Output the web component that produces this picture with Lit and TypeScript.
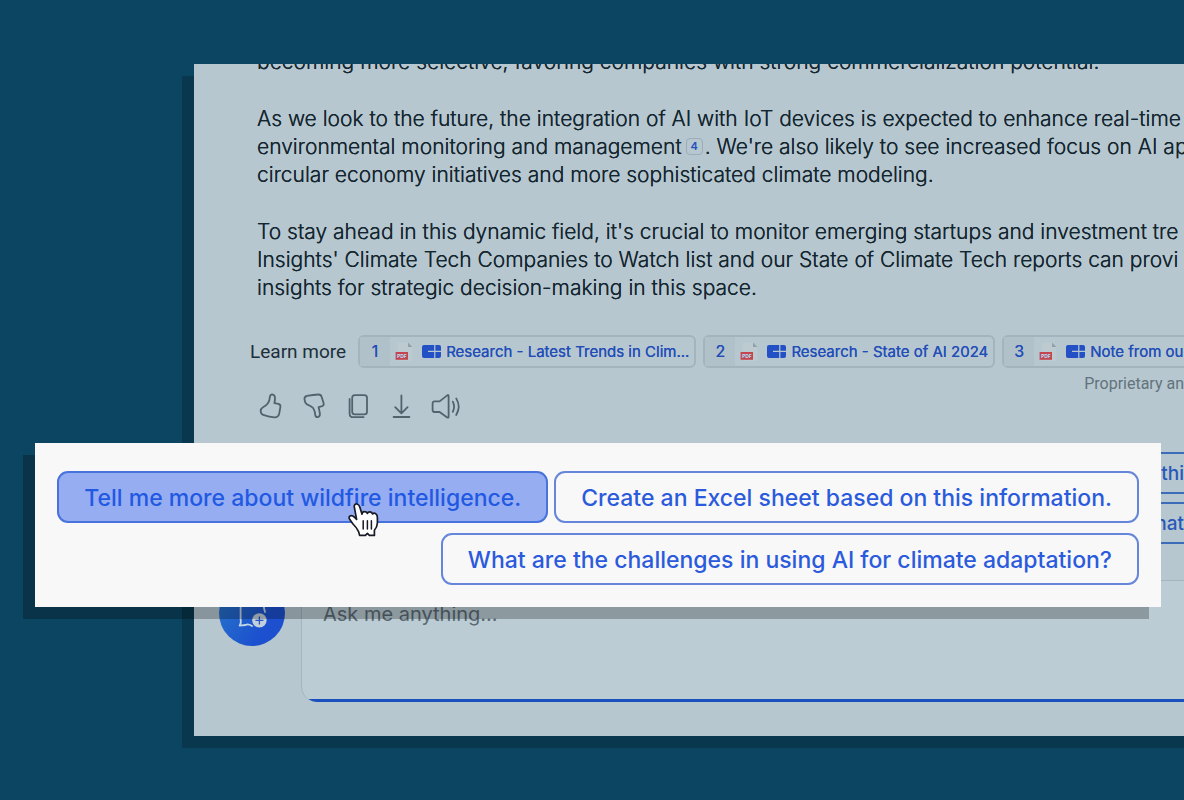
import { LitElement, html, css, svg } from "lit";
import { customElement } from "lit/decorators.js";

interface Source {
  num: number;
  title: string;
}

const sources: Source[] = [
  { num: 1, title: "Research - Latest Trends in Clim..." },
  { num: 2, title: "Research - State of AI 2024" },
  { num: 3, title: "Note from our" },
];

const actions = [
  {
    label: "Like",
    shape: svg`<path d="M13.8 5.2Q14.2 2.4 16.2 2.4Q18.8 2.6 19 6Q19 8.6 18.4 11.2L22.4 11.9Q24.7 12.5 24.4 14.8L23.2 21.6Q22.4 25.4 18.6 25.3Q13.5 25.3 7.2 22.9Q4.8 22 4.7 19.2Q4.6 16.6 7 15.2Q13.6 11.8 13.8 5.2Z"/>`,
  },
  {
    label: "Dislike",
    shape: svg`<path d="M4.5 7.4Q4.2 4.6 7 3.9Q13 2.6 18.4 2.5Q21 2.4 21.7 4.9L23.7 11.4Q24 13.4 22.2 14.1L18.6 15.2Q19.4 18.5 19.9 21.6Q20.2 24.7 17.6 25.2Q15.5 25.4 15.2 22.6Q14.6 16.6 11.6 14.8Q9.4 13.4 7 12.4Q4.8 11 4.5 7.4Z"/>`,
  },
  {
    label: "Copy",
    shape: svg`<rect x="8.2" y="3.2" width="14.8" height="19.2" rx="2.6"/><path d="M5.6 7V21.4Q5.6 25.2 9.4 25.2H19.6"/>`,
  },
  {
    label: "Download",
    shape: svg`<path d="M13.4 3.4V21.2M7.2 15.2L13.4 21.4L19.6 15.2M5.6 25H21.4"/>`,
  },
  {
    label: "Read aloud",
    shape: svg`<path d="M16.6 4.1Q16.6 2.3 15.2 3.4L7.6 9.4H2.6Q.6 9.4.6 11.4V18Q.6 20 2.6 20H7.6L15.2 25.4Q16.6 26.3 16.6 24.6Z"/><path d="M20.8 9.6Q23.4 14.6 20.8 19.8M24.2 6.4Q29.2 14.6 24.2 23"/>`,
  },
];

@customElement("app-root")
export class AppRoot extends LitElement {
  static styles = css`
    :host {
      display: block;
      font-family: Inter, "Liberation Sans", sans-serif;
    }
    * {
      box-sizing: border-box;
    }
    button,
    textarea {
      font: inherit;
      color: inherit;
      margin: 0;
    }
    .stage {
      position: relative;
      min-height: 100vh;
      padding: 64px 0 64px 194px;
      background: #0c4562;
      overflow: hidden;
    }
    .panel {
      background: #b6c7d0;
      box-shadow: -12px 12px 0 #08374e, 0 12px 0 #08374e;
      padding-bottom: 34px;
      white-space: nowrap;
    }
    .answer {
      overflow: hidden;
      padding-left: 63px;
      color: #14262f;
      font-size: 21px;
      font-weight: 300;
      line-height: 28px;
      text-shadow: 0 0 0 #14262f;
    }
    .answer p {
      margin: 0 0 29px;
    }
    .answer p:first-child {
      margin-top: -16px;
    }
    .cite {
      display: inline-block;
      width: 17px;
      margin: 0 2px 0 4px;
      border: 1px solid #9badb9;
      border-radius: 4px;
      color: #2451bd;
      font-size: 11px;
      font-weight: 600;
      line-height: 15px;
      text-align: center;
      text-decoration: none;
      text-shadow: none;
      vertical-align: 4px;
    }
    .sources {
      display: flex;
      align-items: center;
      gap: 7px;
      padding: 4px 0 0 56px;
      overflow: hidden;
    }
    .lead {
      margin-right: 5px;
      color: #1d2f38;
      font-family: Roboto, sans-serif;
      font-size: 19px;
    }
    .chip {
      display: flex;
      flex: none;
      align-items: center;
      height: 33px;
      padding-right: 5px;
      border: 2px solid #a3b4bd;
      border-radius: 6px;
      color: #234eb8;
      font-size: 15px;
      text-decoration: none;
      text-shadow: 0 0 0 #234eb8;
    }
    .num {
      width: 30px;
      background: #b0c1ca;
      font-size: 16px;
      line-height: 29px;
      text-align: center;
      margin-right: 5px;
    }
    .pdf {
      margin-right: 9px;
    }
    .mark {
      margin-right: 5px;
    }
    .note {
      margin: 0;
      padding-top: 8px;
      display: flex;
      justify-content: flex-end;
      color: #62737c;
      font-family: Roboto, sans-serif;
      font-size: 16px;
      line-height: 16px;
    }
    .actions {
      display: flex;
      gap: 16px;
      padding-left: 62px;
    }
    .action {
      display: block;
      width: 28px;
      height: 28px;
      padding: 0;
      border: 0;
      background: none;
      color: #52636d;
    }
    .action svg {
      display: block;
      overflow: visible;
    }
    .queries {
      display: flex;
      flex-direction: column;
      align-items: flex-end;
      gap: 8px;
      margin-top: 32px;
      overflow: hidden;
    }
    .query {
      height: 42px;
      padding: 0 0 0 19px;
      border: 2px solid #3d6cb8;
      border-right: 0;
      border-radius: 8px 0 0 8px;
      background: none;
      color: #2a58b8;
      font-size: 19px;
      font-weight: 500;
    }
    .composer {
      display: flex;
      align-items: flex-start;
      gap: 16px;
      margin-top: 36px;
      padding-left: 25px;
    }
    .fresh {
      flex: none;
      width: 66px;
      height: 66px;
      padding: 0;
      border: 0;
      border-radius: 50%;
      background: linear-gradient(120deg, #2879c8, #1c50cf 70%);
    }
    .fresh svg {
      display: block;
    }
    .box {
      flex: 1;
      height: 122px;
      border: 1px solid #a3b5be;
      border-right: 0;
      border-bottom: 0;
      border-radius: 16px 0 0 16px;
      background: linear-gradient(#1a50bd, #1a50bd) left bottom / 100% 3px no-repeat #bbccd5;
      overflow: hidden;
    }
    .ask {
      display: block;
      width: 100%;
      height: 100%;
      padding: 19px 21px;
      border: 0;
      background: none;
      resize: none;
      outline: none;
      font-size: 20px;
      line-height: 28px;
    }
    .ask::placeholder {
      color: #5b6b74;
      opacity: 1;
    }
    .callout {
      position: absolute;
      top: 443px;
      left: 35px;
      right: 23px;
      display: flex;
      flex-wrap: wrap;
      justify-content: flex-end;
      gap: 10px 6px;
      padding: 28px 22px 22px 16px;
      background: #f8f8f8;
      box-shadow: -12px 12px 0 rgba(0, 0, 0, 0.25);
    }
    .prompt {
      height: 52px;
      padding: 2px 25px 0;
      border: 2px solid #6586da;
      border-radius: 11px;
      background: none;
      color: #2b5bdc;
      font-size: 23px;
      font-weight: 500;
      white-space: nowrap;
    }
    .prompt.active {
      background: #96adf2;
      border-color: #4872dc;
      color: #2259e2;
    }
    .pointer {
      position: absolute;
      left: 347px;
      top: 502px;
    }
  `;

  private chip(s: Source) {
    return html`<a class="chip" href="#source-${s.num}">
      <span class="num">${s.num}</span>
      <svg class="pdf" width="18" height="20" viewBox="0 0 18 20" aria-hidden="true">
        <path d="M2.6 .6H13L17.4 5V19H2.6Z" fill="#bdcacf" />
        <path d="M13 .6V5H17.4Z" fill="#8fa1aa" />
        <rect x=".6" y="10" width="12.4" height="7.8" fill="#c4454f" />
        <text x="6.8" y="15.8" font-family="Inter, sans-serif" font-size="5" font-weight="800" text-anchor="middle" fill="#d9d6da">PDF</text>
      </svg>
      <svg class="mark" width="19" height="13" viewBox="0 0 19 13" aria-hidden="true">
        <path d="M2 0H12.2V5.8H6V7H12.2V13H2Q0 13 0 11V2Q0 0 2 0ZM13.4 0H17Q19 0 19 2V5.8H13.4ZM13.4 7H19V11Q19 13 17 13H13.4Z" fill="#2350c4" />
      </svg>
      <span>${s.title}</span>
    </a>`;
  }

  render() {
    return html`
      <main class="stage">
        <section class="panel">
          <div class="answer">
            <p>becoming more selective, favoring companies with strong commercialization potential.</p>
            <p>
              As we look to the future, the integration of AI with IoT devices is expected to enhance real-time<br />
              environmental monitoring and management<a class="cite" href="#source-4">4</a>. We're also likely to see increased focus on AI ap<br />
              circular economy initiatives and more sophisticated climate modeling.
            </p>
            <p>
              To stay ahead in this dynamic field, it's crucial to monitor emerging startups and investment tre<br />
              Insights' Climate Tech Companies to Watch list and our State of Climate Tech reports can provi<br />
              insights for strategic decision-making in this space.
            </p>
          </div>
          <nav class="sources" aria-label="Sources">
            <span class="lead">Learn more</span>
            ${sources.map((s) => this.chip(s))}
          </nav>
          <p class="note">Proprietary an</p>
          <div class="actions">
            ${actions.map(
              (a) => html`<button class="action" aria-label=${a.label}>
                <svg width="28" height="28" viewBox="0 0 28 28" fill="none" stroke="currentColor" stroke-width="1.8" stroke-linecap="round" stroke-linejoin="round">${a.shape}</svg>
              </button>`
            )}
          </div>
          <div class="queries">
            <button class="query">thi</button>
            <button class="query">hat</button>
          </div>
          <div class="composer">
            <button class="fresh" aria-label="New chat">
              <svg width="66" height="66" viewBox="0 0 66 66" fill="none" aria-hidden="true">
                <path d="M33 46Q29 43.4 26.6 45L20.6 45.6Q22.4 43 21.6 39.6V28Q21.6 20 29.6 20H37Q45 20 45 28L46 32" stroke="#c3d5e6" stroke-width="1.8" stroke-linecap="round" stroke-linejoin="round" />
                <circle cx="40.4" cy="40.4" r="7.2" fill="#c3d0dc" />
                <path d="M40.4 36.4V44.4M36.4 40.4H44.4" stroke="#2355c4" stroke-width="1.3" />
              </svg>
            </button>
            <div class="box">
              <textarea class="ask" aria-label="Ask me anything" placeholder="Ask me anything..."></textarea>
            </div>
          </div>
        </section>
        <section class="callout" aria-label="Suggested prompts">
          <button class="prompt active">Tell me more about wildfire intelligence.</button>
          <button class="prompt">Create an Excel sheet based on this information.</button>
          <button class="prompt">What are the challenges in using AI for climate adaptation?</button>
        </section>
        <svg class="pointer" width="33" height="36" viewBox="0 0 33 36" aria-hidden="true">
          <path d="M7.2 4.4Q7.6 1.6 10 2Q12 2.4 12.8 5L15 12.2Q15.2 9.6 17.4 9.6Q19.6 9.6 20.4 11.4Q21 9.6 23 9.8Q25 10 25.6 12Q26.8 10.6 28.4 11.4Q30.4 12.4 30.4 15.4V21Q30.2 25 27.4 28.2V33.4H22.4L20.4 31.4L18.4 33.4H12.6L11.6 29.6Q9.6 25.4 6 22L2.8 17.6Q1.4 15 3 14Q5 13 7.2 15L9.6 17.4Z" fill="#fff" stroke="#161b24" stroke-width="1.7" stroke-linejoin="round" />
          <path d="M16.2 18.8V27M20.4 18.8V27M24.4 18.8V27" stroke="#161b24" stroke-width="1.5" stroke-linecap="round" />
        </svg>
      </main>
    `;
  }
}
